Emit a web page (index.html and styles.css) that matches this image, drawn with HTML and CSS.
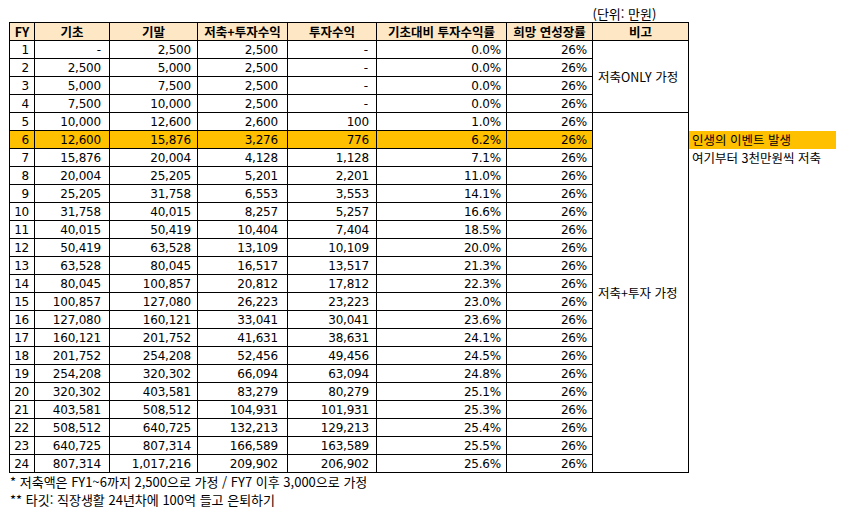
FILE: index.html
```html
<!DOCTYPE html>
<html lang="ko">
<head>
<meta charset="utf-8">
<link rel="stylesheet" href="styles.css">
</head>
<body>
<table class="sheet">
  <colgroup>
    <col class="c-fy"><col class="c-b"><col class="c-e"><col class="c-s"><col class="c-i"><col class="c-r"><col class="c-g"><col class="c-n"><col class="c-side">
  </colgroup>
  <tr class="unit-row"><td colspan="7"></td><td class="unit">(단위: 만원)</td><td></td></tr>
  <tr class="head">
    <th>FY</th><th>기초</th><th>기말</th><th>저축+투자수익</th><th>투자수익</th><th>기초대비 투자수익률</th><th>희망 연성장률</th><th>비고</th><td class="side"></td>
  </tr>
  <tr><td class="fy">1</td><td class="n b dash">-</td><td class="n e">2,500</td><td class="n s">2,500</td><td class="n i dash">-</td><td class="n r">0.0%</td><td class="n g">26%</td><td class="note" rowspan="4">저축ONLY 가정</td><td class="side"></td></tr>
  <tr><td class="fy">2</td><td class="n b">2,500</td><td class="n e">5,000</td><td class="n s">2,500</td><td class="n i dash">-</td><td class="n r">0.0%</td><td class="n g">26%</td><td class="side"></td></tr>
  <tr><td class="fy">3</td><td class="n b">5,000</td><td class="n e">7,500</td><td class="n s">2,500</td><td class="n i dash">-</td><td class="n r">0.0%</td><td class="n g">26%</td><td class="side"></td></tr>
  <tr><td class="fy">4</td><td class="n b">7,500</td><td class="n e">10,000</td><td class="n s">2,500</td><td class="n i dash">-</td><td class="n r">0.0%</td><td class="n g">26%</td><td class="side"></td></tr>
  <tr><td class="fy">5</td><td class="n b">10,000</td><td class="n e">12,600</td><td class="n s">2,600</td><td class="n i">100</td><td class="n r">1.0%</td><td class="n g">26%</td><td class="note" rowspan="20">저축+투자 가정</td><td class="side"></td></tr>
  <tr class="hl"><td class="fy">6</td><td class="n b">12,600</td><td class="n e">15,876</td><td class="n s">3,276</td><td class="n i">776</td><td class="n r">6.2%</td><td class="n g">26%</td><td class="side event">인생의 이벤트 발생</td></tr>
  <tr><td class="fy">7</td><td class="n b">15,876</td><td class="n e">20,004</td><td class="n s">4,128</td><td class="n i">1,128</td><td class="n r">7.1%</td><td class="n g">26%</td><td class="side text">여기부터 3천만원씩 저축</td></tr>
  <tr><td class="fy">8</td><td class="n b">20,004</td><td class="n e">25,205</td><td class="n s">5,201</td><td class="n i">2,201</td><td class="n r">11.0%</td><td class="n g">26%</td><td class="side"></td></tr>
  <tr><td class="fy">9</td><td class="n b">25,205</td><td class="n e">31,758</td><td class="n s">6,553</td><td class="n i">3,553</td><td class="n r">14.1%</td><td class="n g">26%</td><td class="side"></td></tr>
  <tr><td class="fy">10</td><td class="n b">31,758</td><td class="n e">40,015</td><td class="n s">8,257</td><td class="n i">5,257</td><td class="n r">16.6%</td><td class="n g">26%</td><td class="side"></td></tr>
  <tr><td class="fy">11</td><td class="n b">40,015</td><td class="n e">50,419</td><td class="n s">10,404</td><td class="n i">7,404</td><td class="n r">18.5%</td><td class="n g">26%</td><td class="side"></td></tr>
  <tr><td class="fy">12</td><td class="n b">50,419</td><td class="n e">63,528</td><td class="n s">13,109</td><td class="n i">10,109</td><td class="n r">20.0%</td><td class="n g">26%</td><td class="side"></td></tr>
  <tr><td class="fy">13</td><td class="n b">63,528</td><td class="n e">80,045</td><td class="n s">16,517</td><td class="n i">13,517</td><td class="n r">21.3%</td><td class="n g">26%</td><td class="side"></td></tr>
  <tr><td class="fy">14</td><td class="n b">80,045</td><td class="n e">100,857</td><td class="n s">20,812</td><td class="n i">17,812</td><td class="n r">22.3%</td><td class="n g">26%</td><td class="side"></td></tr>
  <tr><td class="fy">15</td><td class="n b">100,857</td><td class="n e">127,080</td><td class="n s">26,223</td><td class="n i">23,223</td><td class="n r">23.0%</td><td class="n g">26%</td><td class="side"></td></tr>
  <tr><td class="fy">16</td><td class="n b">127,080</td><td class="n e">160,121</td><td class="n s">33,041</td><td class="n i">30,041</td><td class="n r">23.6%</td><td class="n g">26%</td><td class="side"></td></tr>
  <tr><td class="fy">17</td><td class="n b">160,121</td><td class="n e">201,752</td><td class="n s">41,631</td><td class="n i">38,631</td><td class="n r">24.1%</td><td class="n g">26%</td><td class="side"></td></tr>
  <tr><td class="fy">18</td><td class="n b">201,752</td><td class="n e">254,208</td><td class="n s">52,456</td><td class="n i">49,456</td><td class="n r">24.5%</td><td class="n g">26%</td><td class="side"></td></tr>
  <tr><td class="fy">19</td><td class="n b">254,208</td><td class="n e">320,302</td><td class="n s">66,094</td><td class="n i">63,094</td><td class="n r">24.8%</td><td class="n g">26%</td><td class="side"></td></tr>
  <tr><td class="fy">20</td><td class="n b">320,302</td><td class="n e">403,581</td><td class="n s">83,279</td><td class="n i">80,279</td><td class="n r">25.1%</td><td class="n g">26%</td><td class="side"></td></tr>
  <tr><td class="fy">21</td><td class="n b">403,581</td><td class="n e">508,512</td><td class="n s">104,931</td><td class="n i">101,931</td><td class="n r">25.3%</td><td class="n g">26%</td><td class="side"></td></tr>
  <tr><td class="fy">22</td><td class="n b">508,512</td><td class="n e">640,725</td><td class="n s">132,213</td><td class="n i">129,213</td><td class="n r">25.4%</td><td class="n g">26%</td><td class="side"></td></tr>
  <tr><td class="fy">23</td><td class="n b">640,725</td><td class="n e">807,314</td><td class="n s">166,589</td><td class="n i">163,589</td><td class="n r">25.5%</td><td class="n g">26%</td><td class="side"></td></tr>
  <tr><td class="fy">24</td><td class="n b">807,314</td><td class="n e">1,017,216</td><td class="n s">209,902</td><td class="n i">206,902</td><td class="n r">25.6%</td><td class="n g">26%</td><td class="side"></td></tr>
</table>
<div class="footnotes">
  <p>* 저축액은 FY1~6까지 2,500으로 가정 / FY7 이후 3,000으로 가정</p>
  <p>** 타깃: 직장생활 24년차에 100억 들고 은퇴하기</p>
</div>
</body>
</html>
```

FILE: styles.css
```css
html, body {
  margin: 0;
  padding: 0;
  background: #fff;
}
body {
  font-family: "Noto Sans CJK KR", "Noto Sans", sans-serif;
  font-size: 12px;
  color: #000;
}
.sheet {
  border-collapse: collapse;
  table-layout: fixed;
  margin: 5px 0 0 9px;
}
.c-fy { width: 25px; }
.c-b { width: 75px; }
.c-e { width: 88px; }
.c-s { width: 90px; }
.c-i { width: 89px; }
.c-r { width: 130px; }
.c-g { width: 86px; }
.c-n { width: 96px; }
.c-side { width: 148px; }

.sheet th, .sheet td {
  padding: 0;
  height: 17px;
  line-height: 16px;
  white-space: nowrap;
  overflow: hidden;
  vertical-align: middle;
}
.sheet th {
  border: 1px solid #000;
  background: #fde7c4;
  font-weight: bold;
  text-align: center;
  font-size: 12.5px;
}
.sheet td.fy, .sheet td.n, .sheet td.note {
  border: 1px solid #000;
}
.unit-row td { border: none; }
.sheet td.unit {
  text-align: left;
  padding-left: 0;
  font-size: 13px;
}
.fy {
  text-align: right;
  font-family: "DejaVu Sans", sans-serif;
  font-size: 12px;
  letter-spacing: -0.2px;
}
.n {
  text-align: right;
  font-family: "DejaVu Sans", sans-serif;
  font-size: 12px;
  letter-spacing: -0.2px;
}
.sheet td.fy { padding-right: 5px; }
.sheet td.b { padding-right: 8px; }
.sheet td.e { padding-right: 6px; }
.sheet td.s { padding-right: 9px; }
.sheet td.i { padding-right: 7px; }
.sheet td.r { padding-right: 5px; }
.sheet td.g { padding-right: 5px; }
.sheet td.dash { padding-right: 8px; }
.sheet td.note {
  text-align: left;
  padding-left: 5px;
  font-size: 12.5px;
}
.hl td.fy, .hl td.n {
  background: #ffc000;
}
.sheet td.side {
  border: none;
  padding-left: 3px;
  text-align: left;
  font-size: 12.5px;
}
.sheet td.event {
  background: #ffc000;
}
.footnotes {
  padding-left: 10px;
  font-size: 13px;
}
.footnotes p {
  margin: 0;
  line-height: 18px;
  height: 18px;
}
```
